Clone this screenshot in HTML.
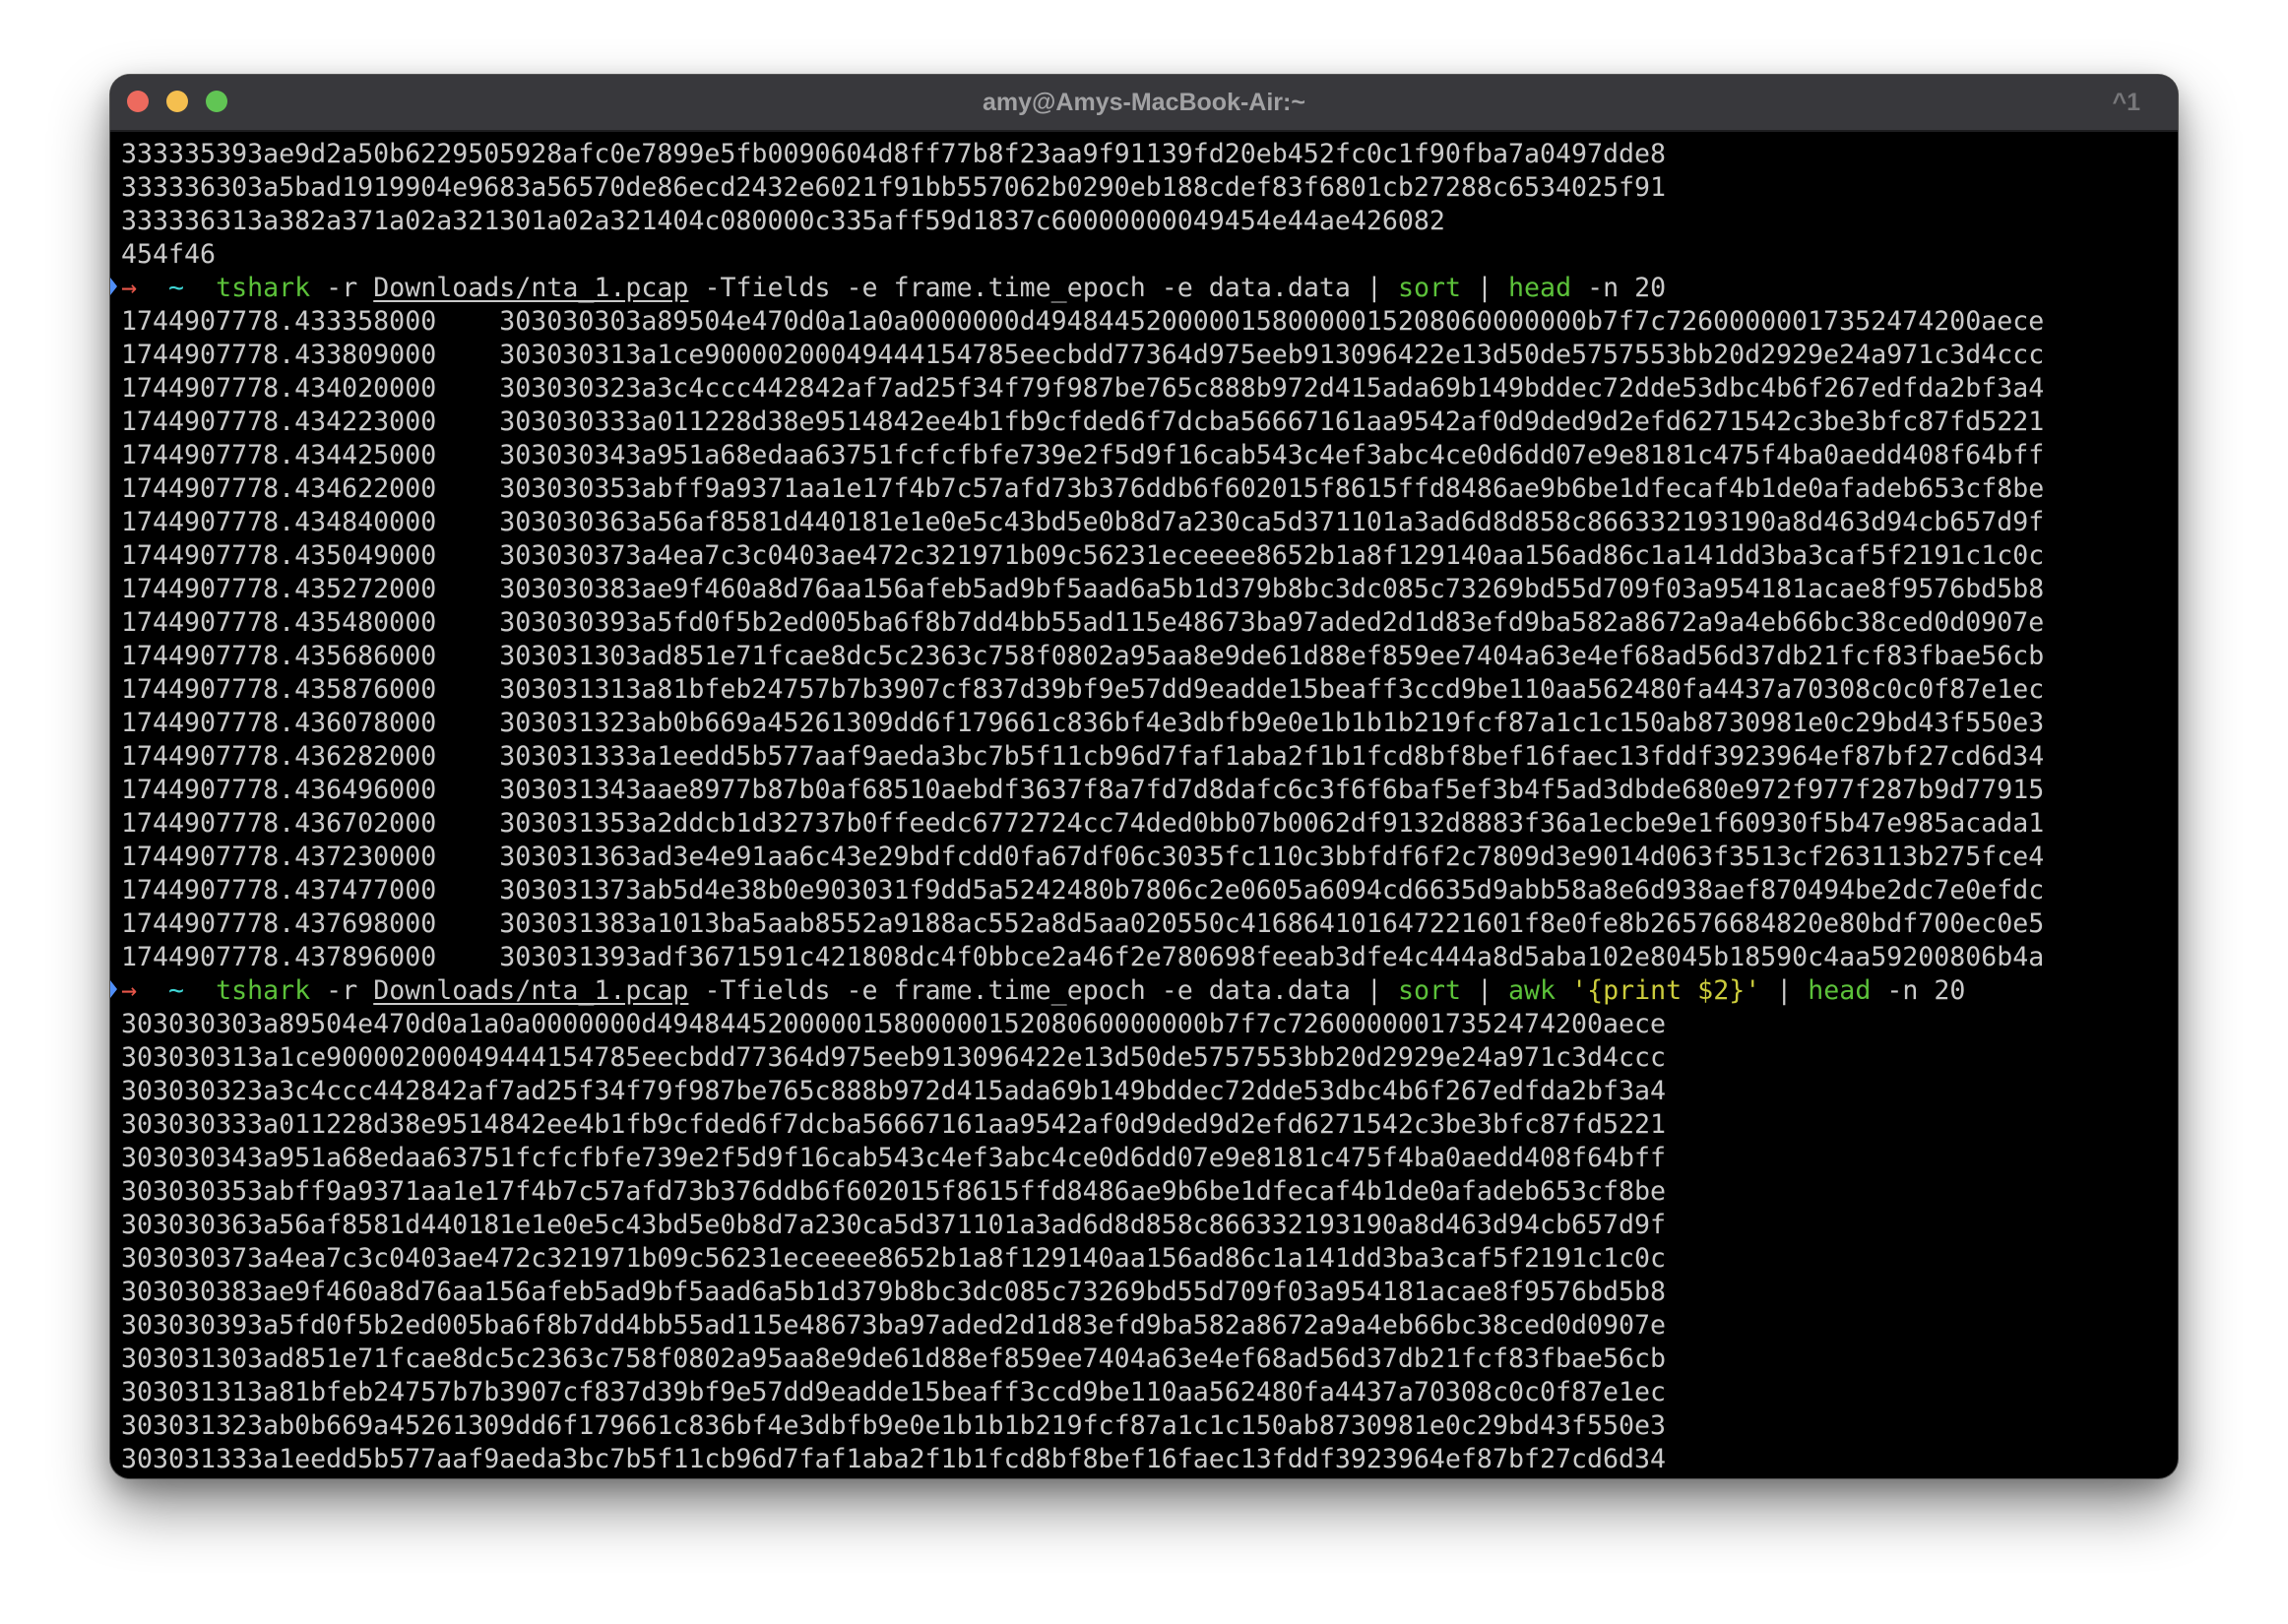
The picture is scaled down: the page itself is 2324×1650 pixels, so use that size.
<!DOCTYPE html>
<html><head><meta charset="utf-8"><style>
html,body{margin:0;padding:0;background:#fff;width:2324px;height:1650px;overflow:hidden}
.win{position:absolute;left:112px;top:76px;width:2100px;height:1426px;border-radius:20px;background:#000;overflow:hidden;
box-shadow:0 0 0 1px #555,0 30px 60px rgba(0,0,0,0.45),0 10px 25px rgba(0,0,0,0.25)}
.bar{position:absolute;left:0;top:0;width:100%;height:56px;background:#38383c;border-bottom:2px solid #1e1e20}
.dot{position:absolute;top:16px;width:22px;height:22px;border-radius:50%}
.title{position:absolute;left:0;right:0;top:0;height:56px;text-align:center;color:#a2a2a4;font:bold 25px "Liberation Sans",sans-serif;line-height:56px}
.kb{position:absolute;right:38px;top:0;color:#77777a;font:bold 25px "Liberation Sans",sans-serif;line-height:56px}
pre{position:absolute;left:11px;top:64px;margin:0;font-family:"DejaVu Sans Mono","Liberation Mono",monospace;font-size:26.6px;line-height:34px;color:#cacaca;white-space:pre}
.g{color:#5cc23a}.y{color:#cccc3c}.r{color:#e8564a}.c{color:#3fd5d5}.u{text-decoration:underline;text-underline-offset:4px}
.mk{position:absolute;left:0;width:0;height:0;border-top:9px solid transparent;border-bottom:9px solid transparent;border-left:7px solid #4f8ef7}
</style></head><body>
<div class="win">
<div class="bar"></div>
<div class="dot" style="left:17px;background:#ed6a5e"></div>
<div class="dot" style="left:57px;background:#f5bf4f"></div>
<div class="dot" style="left:97px;background:#61c554"></div>
<div class="title">amy@Amys-MacBook-Air:~</div>
<div class="kb">^1</div>
<div class="mk" style="top:206px"></div>
<div class="mk" style="top:920px"></div>
<pre>333335393ae9d2a50b6229505928afc0e7899e5fb0090604d8ff77b8f23aa9f91139fd20eb452fc0c1f90fba7a0497dde8
333336303a5bad1919904e9683a56570de86ecd2432e6021f91bb557062b0290eb188cdef83f6801cb27288c6534025f91
333336313a382a371a02a321301a02a321404c080000c335aff59d1837c60000000049454e44ae426082
454f46
<span class="r">→</span>  <span class="c">~</span>  <span class="g">tshark</span> -r <span class="u">Downloads/nta_1.pcap</span> -Tfields -e frame.time_epoch -e data.data | <span class="g">sort</span> | <span class="g">head</span> -n 20
1744907778.433358000    303030303a89504e470d0a1a0a0000000d49484452000001580000015208060000000b7f7c72600000017352474200aece
1744907778.433809000    303030313a1ce90000200049444154785eecbdd77364d975eeb913096422e13d50de5757553bb20d2929e24a971c3d4ccc
1744907778.434020000    303030323a3c4ccc442842af7ad25f34f79f987be765c888b972d415ada69b149bddec72dde53dbc4b6f267edfda2bf3a4
1744907778.434223000    303030333a011228d38e9514842ee4b1fb9cfded6f7dcba56667161aa9542af0d9ded9d2efd6271542c3be3bfc87fd5221
1744907778.434425000    303030343a951a68edaa63751fcfcfbfe739e2f5d9f16cab543c4ef3abc4ce0d6dd07e9e8181c475f4ba0aedd408f64bff
1744907778.434622000    303030353abff9a9371aa1e17f4b7c57afd73b376ddb6f602015f8615ffd8486ae9b6be1dfecaf4b1de0afadeb653cf8be
1744907778.434840000    303030363a56af8581d440181e1e0e5c43bd5e0b8d7a230ca5d371101a3ad6d8d858c866332193190a8d463d94cb657d9f
1744907778.435049000    303030373a4ea7c3c0403ae472c321971b09c56231eceeee8652b1a8f129140aa156ad86c1a141dd3ba3caf5f2191c1c0c
1744907778.435272000    303030383ae9f460a8d76aa156afeb5ad9bf5aad6a5b1d379b8bc3dc085c73269bd55d709f03a954181acae8f9576bd5b8
1744907778.435480000    303030393a5fd0f5b2ed005ba6f8b7dd4bb55ad115e48673ba97aded2d1d83efd9ba582a8672a9a4eb66bc38ced0d0907e
1744907778.435686000    303031303ad851e71fcae8dc5c2363c758f0802a95aa8e9de61d88ef859ee7404a63e4ef68ad56d37db21fcf83fbae56cb
1744907778.435876000    303031313a81bfeb24757b7b3907cf837d39bf9e57dd9eadde15beaff3ccd9be110aa562480fa4437a70308c0c0f87e1ec
1744907778.436078000    303031323ab0b669a45261309dd6f179661c836bf4e3dbfb9e0e1b1b1b219fcf87a1c1c150ab8730981e0c29bd43f550e3
1744907778.436282000    303031333a1eedd5b577aaf9aeda3bc7b5f11cb96d7faf1aba2f1b1fcd8bf8bef16faec13fddf3923964ef87bf27cd6d34
1744907778.436496000    303031343aae8977b87b0af68510aebdf3637f8a7fd7d8dafc6c3f6f6baf5ef3b4f5ad3dbde680e972f977f287b9d77915
1744907778.436702000    303031353a2ddcb1d32737b0ffeedc6772724cc74ded0bb07b0062df9132d8883f36a1ecbe9e1f60930f5b47e985acada1
1744907778.437230000    303031363ad3e4e91aa6c43e29bdfcdd0fa67df06c3035fc110c3bbfdf6f2c7809d3e9014d063f3513cf263113b275fce4
1744907778.437477000    303031373ab5d4e38b0e903031f9dd5a5242480b7806c2e0605a6094cd6635d9abb58a8e6d938aef870494be2dc7e0efdc
1744907778.437698000    303031383a1013ba5aab8552a9188ac552a8d5aa020550c416864101647221601f8e0fe8b26576684820e80bdf700ec0e5
1744907778.437896000    303031393adf3671591c421808dc4f0bbce2a46f2e780698feeab3dfe4c444a8d5aba102e8045b18590c4aa59200806b4a
<span class="r">→</span>  <span class="c">~</span>  <span class="g">tshark</span> -r <span class="u">Downloads/nta_1.pcap</span> -Tfields -e frame.time_epoch -e data.data | <span class="g">sort</span> | <span class="g">awk</span> <span class="y">'{print $2}'</span> | <span class="g">head</span> -n 20
303030303a89504e470d0a1a0a0000000d49484452000001580000015208060000000b7f7c72600000017352474200aece
303030313a1ce90000200049444154785eecbdd77364d975eeb913096422e13d50de5757553bb20d2929e24a971c3d4ccc
303030323a3c4ccc442842af7ad25f34f79f987be765c888b972d415ada69b149bddec72dde53dbc4b6f267edfda2bf3a4
303030333a011228d38e9514842ee4b1fb9cfded6f7dcba56667161aa9542af0d9ded9d2efd6271542c3be3bfc87fd5221
303030343a951a68edaa63751fcfcfbfe739e2f5d9f16cab543c4ef3abc4ce0d6dd07e9e8181c475f4ba0aedd408f64bff
303030353abff9a9371aa1e17f4b7c57afd73b376ddb6f602015f8615ffd8486ae9b6be1dfecaf4b1de0afadeb653cf8be
303030363a56af8581d440181e1e0e5c43bd5e0b8d7a230ca5d371101a3ad6d8d858c866332193190a8d463d94cb657d9f
303030373a4ea7c3c0403ae472c321971b09c56231eceeee8652b1a8f129140aa156ad86c1a141dd3ba3caf5f2191c1c0c
303030383ae9f460a8d76aa156afeb5ad9bf5aad6a5b1d379b8bc3dc085c73269bd55d709f03a954181acae8f9576bd5b8
303030393a5fd0f5b2ed005ba6f8b7dd4bb55ad115e48673ba97aded2d1d83efd9ba582a8672a9a4eb66bc38ced0d0907e
303031303ad851e71fcae8dc5c2363c758f0802a95aa8e9de61d88ef859ee7404a63e4ef68ad56d37db21fcf83fbae56cb
303031313a81bfeb24757b7b3907cf837d39bf9e57dd9eadde15beaff3ccd9be110aa562480fa4437a70308c0c0f87e1ec
303031323ab0b669a45261309dd6f179661c836bf4e3dbfb9e0e1b1b1b219fcf87a1c1c150ab8730981e0c29bd43f550e3
303031333a1eedd5b577aaf9aeda3bc7b5f11cb96d7faf1aba2f1b1fcd8bf8bef16faec13fddf3923964ef87bf27cd6d34</pre>
</div>
</body></html>
